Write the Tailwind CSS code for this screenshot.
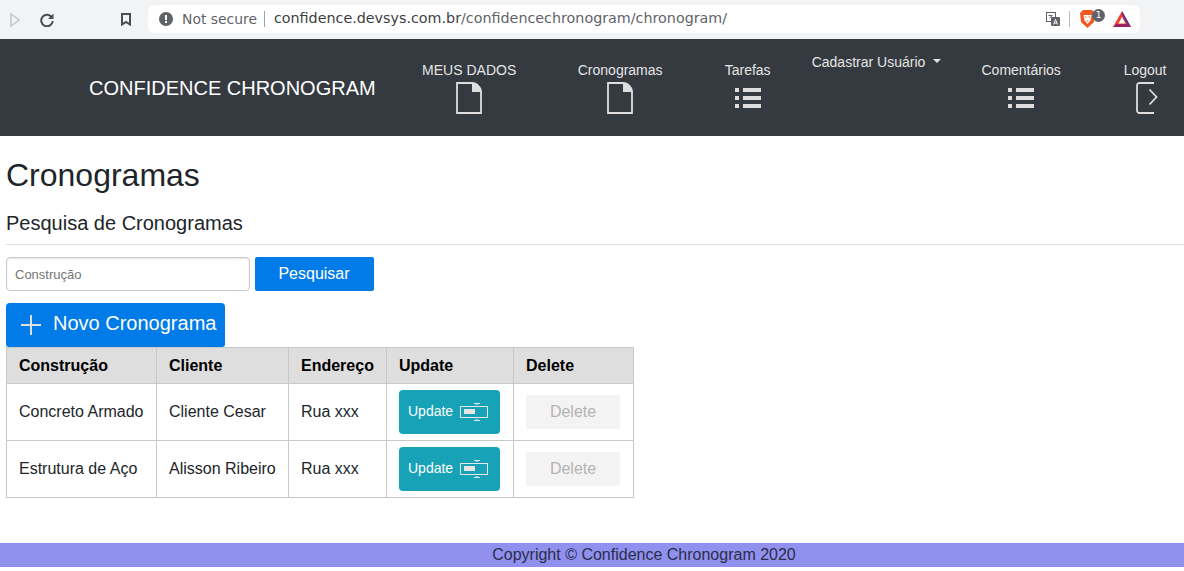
<!DOCTYPE html>
<html lang="pt">
<head>
  <meta charset="UTF-8">
  <title>Confidence Chronogram</title>
  <script src="https://cdn.jsdelivr.net/npm/@tailwindcss/browser@4"></script>
</head>
<body class="bg-white font-['Liberation_Sans',Arial,sans-serif] text-[#212529] h-[571px] overflow-hidden">
  <!-- barra do navegador -->
  <div class="h-[39px] bg-[#f1f3f4] flex items-center font-['DejaVu_Sans',sans-serif]">
    <svg class="ml-[10px] w-[10px] h-[14px]" viewBox="0 0 10 14" fill="none" stroke="#c4c7c9" stroke-width="1.5"><path d="M1 1v12l8-6z"/></svg>
    <svg class="ml-[20px] w-[14px] h-[14px]" viewBox="0 0 14 14" fill="none" stroke="#4a4d50" stroke-width="2"><path d="M12 4.500A5.800 5.800 0 1 0 12.800 8"/><path d="M13.500 0.500v5.500h-5.500z" fill="#4a4d50" stroke="none"/></svg>
    <svg class="ml-[67px] w-[10px] h-[13px]" viewBox="0 0 10 13" fill="none" stroke="#4a4d50" stroke-width="2"><path d="M1 1h8v10.500L5 9l-4 2.500z"/></svg>
    <div class="ml-[17px] w-[992px] h-[28px] bg-white rounded-[7px] flex items-center mb-[1px]">
      <svg class="ml-[11px] w-[14px] h-[14px]" viewBox="0 0 14 14"><circle cx="7" cy="7" r="7" fill="#5f6368"/><rect x="6" y="3" width="2" height="5" fill="#fff"/><rect x="6" y="9" width="2" height="2" fill="#fff"/></svg>
      <span class="ml-[9px] text-[13.900px] text-[#5f6368]">Not secure</span>
      <span class="ml-[7px] w-px h-[16px] bg-[#9aa0a6]"></span>
      <span class="ml-[9px] text-[14.300px] text-[#5f6368] whitespace-nowrap"><span class="text-[#3c4043]">confidence.devsys.com.br</span>/confidencechronogram/chronogram/</span>
      <div class="ml-auto flex items-center">
        <svg class="w-[14px] h-[14px]" viewBox="0 0 14 14"><rect x="0.500" y="0.500" width="9" height="9" fill="#fff" stroke="#5f6368"/><rect x="5" y="5" width="9" height="9" rx="1" fill="#5f6368"/><path d="M7.500 12.500l2-5 2 5M8.200 11h2.600" fill="none" stroke="#fff"/><path d="M2.500 3.500h4M3.500 6l2.500-2" stroke="#5f6368"/></svg>
        <span class="ml-[9px] w-px h-[16px] bg-[#b8bbbd]"></span>
        <div class="ml-[10px] relative w-[25px] h-[18px]">
          <svg class="absolute left-0 top-0 w-[15px] h-[18px]" viewBox="0 0 15 18"><path d="M3 0h9l3 3-1 9-6.500 6L1 12 0 3z" fill="#f1571f"/><path d="M3.500 5h8l-1 5.500-3 3.500-3-3.500z" fill="#fff"/><path d="M5 7h1.500M8.500 7H10M6.500 11h2" stroke="#f1571f"/></svg>
          <span class="absolute left-[12px] top-[-1px] w-[13px] h-[13px] rounded-full bg-[#5f6368] text-white text-[9px] leading-[13px] text-center">1</span>
        </div>
        <svg class="ml-[8px] mr-[9px] w-[18px] h-[16px]" viewBox="0 0 18 16"><path d="M9 0l9 16H0z" fill="#e8452c"/><path d="M0 16h18l-3.500-3h-11z" fill="#9e1f63"/><path d="M9 0l9 16-4-3-5-9z" fill="#662d91"/><path d="M9 6l3.500 6.500h-7z" fill="#fff"/></svg>
      </div>
    </div>
  </div>

  <!-- navbar -->
  <nav class="h-[97px] bg-[#343a40] flex text-[#e4e4e4] text-[14px] leading-[21px]">
    <a class="ml-[89px] mt-[36px] text-[20px] leading-[26px] whitespace-nowrap text-white">CONFIDENCE CHRONOGRAM</a>
    <div class="ml-[46px] mt-[21px] flex flex-col items-center w-[95px]">
      <span>MEUS DADOS</span>
      <svg class="w-[26px] h-[32px] mt-[1px]" viewBox="0 0 26 32"><path d="M1 1h15l9 9v21H1z" fill="none" stroke="#dedede" stroke-width="1.800"/><path d="M16 0c5 0 10 5 10 10H16z" fill="#dedede"/></svg>
    </div>
    <div class="ml-[61px] mt-[21px] flex flex-col items-center w-[85px]">
      <span>Cronogramas</span>
      <svg class="w-[26px] h-[32px] mt-[1px]" viewBox="0 0 26 32"><path d="M1 1h15l9 9v21H1z" fill="none" stroke="#dedede" stroke-width="1.800"/><path d="M16 0c5 0 10 5 10 10H16z" fill="#dedede"/></svg>
    </div>
    <div class="ml-[62px] mt-[21px] flex flex-col items-center w-[46px]">
      <span>Tarefas</span>
      <svg class="w-[26px] h-[20px] mt-[7px]" viewBox="0 0 26 20" fill="#dedede"><rect x="0" y="0" width="4" height="4"/><rect x="8" y="0" width="18" height="4"/><rect x="0" y="8" width="4" height="4"/><rect x="8" y="8" width="18" height="4"/><rect x="0" y="16" width="4" height="4"/><rect x="8" y="16" width="18" height="4"/></svg>
    </div>
    <div class="ml-[41px] mt-[13px] flex items-start w-[131px]">
      <span class="whitespace-nowrap">Cadastrar Usuário</span>
      <span class="ml-[8px] mt-[7px] w-0 h-0 border-x-[4.500px] border-x-transparent border-t-[4.500px] border-t-[#e4e4e4]"></span>
    </div>
    <div class="ml-[39px] mt-[21px] flex flex-col items-center w-[79px]">
      <span>Comentários</span>
      <svg class="w-[26px] h-[20px] mt-[7px]" viewBox="0 0 26 20" fill="#dedede"><rect x="0" y="0" width="4" height="4"/><rect x="8" y="0" width="18" height="4"/><rect x="0" y="8" width="4" height="4"/><rect x="8" y="8" width="18" height="4"/><rect x="0" y="16" width="4" height="4"/><rect x="8" y="16" width="18" height="4"/></svg>
    </div>
    <div class="ml-[63px] mt-[21px] flex flex-col items-start w-[44px]">
      <span>Logout</span>
      <svg class="ml-[12px] w-[22px] h-[32px] mt-[1px]" viewBox="0 0 22 32" fill="none" stroke="#dedede" stroke-width="1.800"><path d="M18 1H3.500A2.500 2.500 0 0 0 1 3.500v25A2.500 2.500 0 0 0 3.500 31H18"/><path d="M13.500 7.500l7 7.500-7 7.500"/></svg>
    </div>
  </nav>

  <!-- conteudo -->
  <main class="pl-[6px]">
    <h1 class="text-[32px] leading-[38px] mt-[20px] font-normal">Cronogramas</h1>
    <h2 class="text-[20px] leading-[24px] mt-[17px] font-normal">Pesquisa de Cronogramas</h2>
    <hr class="mt-[9px] border-[#dfdfdf]">
    <form class="flex mt-[12px] items-start">
      <input class="w-[244px] h-[34px] border border-[#c8c8c8] rounded-[4px] px-2 text-[13px] shadow-[inset_0_1px_2px_rgba(0,0,0,0.1)] placeholder:text-[#757575]" placeholder="Construção">
      <button type="button" class="ml-[5px] w-[119px] h-[34px] pr-px pb-px bg-[#007be8] text-white text-[16px] rounded-[2px]">Pesquisar</button>
    </form>
    <a class="mt-[12px] w-[219px] h-[44px] bg-[#007be8] text-white text-[20px] rounded-t-[4px] rounded-b-[3px] flex items-center">
      <svg class="ml-[15px] w-[20px] h-[20px]" viewBox="0 0 20 20" stroke="#dedede" stroke-width="2"><path d="M10 0v20M0 10h20"/></svg>
      <span class="ml-[12px] -mt-[5px]">Novo Cronograma</span>
    </a>
    <table class="border-collapse text-[16px] leading-[24px] border border-[#c8c8c8] w-[628px] table-fixed">
      <thead>
        <tr class="h-[36px] bg-[#dedede] font-bold text-left text-black">
          <th class="w-[150px] px-3 border border-[#c8c8c8]">Construção</th>
          <th class="w-[132px] px-3 border border-[#c8c8c8]">Cliente</th>
          <th class="w-[98px] px-3 border border-[#c8c8c8]">Endereço</th>
          <th class="w-[127px] px-3 border border-[#c8c8c8]">Update</th>
          <th class="px-3 border border-[#c8c8c8]">Delete</th>
        </tr>
      </thead>
      <tbody>
        <tr class="h-[57px]">
          <td class="px-3 border border-[#c8c8c8] whitespace-nowrap">Concreto Armado</td>
          <td class="px-3 border border-[#c8c8c8] whitespace-nowrap">Cliente Cesar</td>
          <td class="px-3 border border-[#c8c8c8]">Rua xxx</td>
          <td class="px-3 border border-[#c8c8c8]">
            <a class="w-[101px] h-[44px] bg-[#17a2b8] rounded-[4px] text-white text-[14px] flex items-center pl-[9px]">
              <span class="-mt-[2px]">Update</span>
              <svg class="ml-[7px] w-[28px] h-[18px]" viewBox="0 0 28 18" fill="none" stroke="#e6e6e6"><rect x="0.500" y="3.500" width="27" height="11"/><rect x="4" y="6" width="11" height="5" fill="#e6e6e6" stroke="none"/><path d="M14 0.500h6M14 17.500h6"/><path d="M16 1.500h2M16 16.500h2" stroke-opacity="0.600"/></svg>
            </a>
          </td>
          <td class="px-3 border border-[#c8c8c8]">
            <span class="block w-[94px] h-[34px] bg-[#f3f3f3] rounded-[2px] text-[#b3b3b3] leading-[34px] text-center">Delete</span>
          </td>
        </tr>
        <tr class="h-[57px]">
          <td class="px-3 border border-[#c8c8c8] whitespace-nowrap">Estrutura de Aço</td>
          <td class="px-3 border border-[#c8c8c8] whitespace-nowrap">Alisson Ribeiro</td>
          <td class="px-3 border border-[#c8c8c8]">Rua xxx</td>
          <td class="px-3 border border-[#c8c8c8]">
            <a class="w-[101px] h-[44px] bg-[#17a2b8] rounded-[4px] text-white text-[14px] flex items-center pl-[9px]">
              <span class="-mt-[2px]">Update</span>
              <svg class="ml-[7px] w-[28px] h-[18px]" viewBox="0 0 28 18" fill="none" stroke="#e6e6e6"><rect x="0.500" y="3.500" width="27" height="11"/><rect x="4" y="6" width="11" height="5" fill="#e6e6e6" stroke="none"/><path d="M14 0.500h6M14 17.500h6"/><path d="M16 1.500h2M16 16.500h2" stroke-opacity="0.600"/></svg>
            </a>
          </td>
          <td class="px-3 border border-[#c8c8c8]">
            <span class="block w-[94px] h-[34px] bg-[#f3f3f3] rounded-[2px] text-[#b3b3b3] leading-[34px] text-center">Delete</span>
          </td>
        </tr>
      </tbody>
    </table>
  </main>

  <footer class="mt-[45px] h-[24px] pl-[104px] bg-[#9090ee] text-center text-[16px] leading-[24px] text-[#2a2d4a]">Copyright © Confidence Chronogram 2020</footer>
</body>
</html>
